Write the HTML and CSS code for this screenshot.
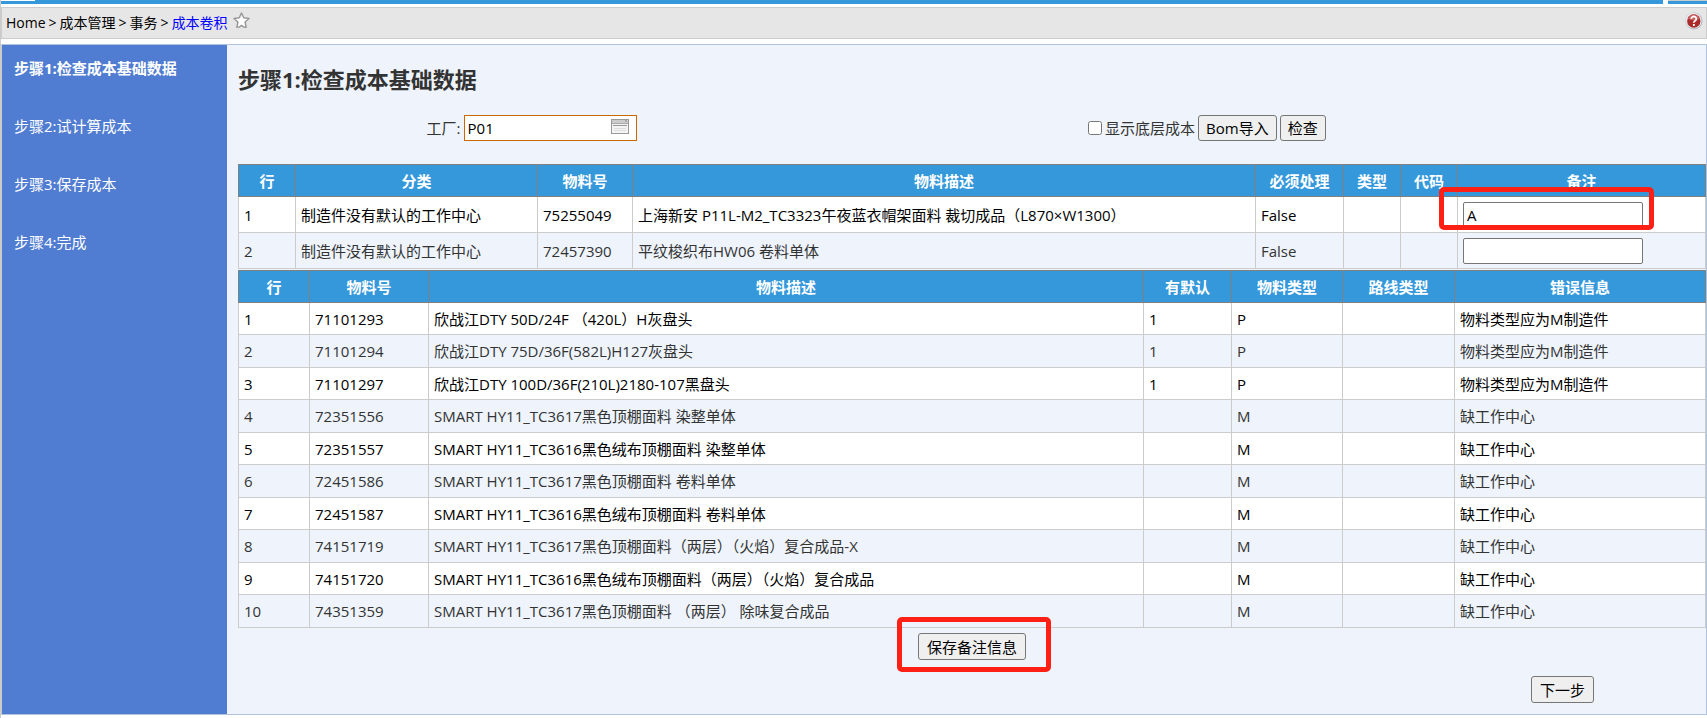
FILE: index.html
```
<!DOCTYPE html>
<html lang="zh-CN">
<head>
<meta charset="utf-8">
<title>成本卷积</title>
<link rel="stylesheet" href="styles.css">
</head>
<body>
<div class="tabline"><span class="tab-active"></span><span class="tab-rest"></span><span class="tab-end"></span></div>
<header class="crumbs">
  <nav class="trail">
    <span>Home</span><span>&gt;</span><span>成本管理</span><span>&gt;</span><span>事务</span><span>&gt;</span><a class="current" href="#">成本卷积</a>
    <svg class="star" width="17" height="17" viewBox="0 0 17 17"><path d="M8.500 1l2.200 4.800 5.300.7-3.900 3.500 1 5.300-2.300-.2-2.300-1.700-2.300 1.700-2.300.2 1-5.300L1 6.500l5.300-.7z" fill="#fff" stroke="#999" stroke-width="1.500" stroke-linejoin="round"/></svg>
  </nav>
  <svg class="help" width="18" height="18" viewBox="0 0 18 18"><circle cx="9" cy="9" r="8.500" fill="#a9adb3"/><circle cx="8.700" cy="8.700" r="7.900" fill="#e9ebee"/><circle cx="8.800" cy="9" r="6.700" fill="#a92a2a"/><path d="M3 7a6 6 0 0 1 11.600 0q-5.800 2.500-11.600 0z" fill="#c96060"/><path d="M6.300 6.800a2.500 2.300 0 1 1 3.900 1.900q-1.400.8-1.400 2" fill="none" stroke="#fff" stroke-width="1.800"/><rect x="7.900" y="12" width="1.900" height="1.900" fill="#fff"/></svg>
</header>
<main class="wizard">
  <nav class="steps">
    <a class="step active" href="#">步骤1:检查成本基础数据</a>
    <a class="step" href="#">步骤2:试计算成本</a>
    <a class="step" href="#">步骤3:保存成本</a>
    <a class="step" href="#">步骤4:完成</a>
  </nav>
  <section class="content">
    <h1 class="title">步骤1:检查成本基础数据</h1>
    <form class="filters">
      <div class="filter">
        <label for="plant">工厂:</label>
        <span class="lookup"><input id="plant" class="lookup-input" type="text" value="P01"><svg class="lookup-icon" width="18" height="15" viewBox="0 0 18 15"><rect x=".5" y=".5" width="17" height="14" fill="#f4f4f4" stroke="#999"/><path d="M1 2.500h16" stroke="#ccc" stroke-width="3"/><path d="M14 2h2" stroke="#888"/><path d="M1 4.500h16" stroke="#aaa"/><path d="M2 6.500h14" stroke="#999"/><path d="M3 9.500h12M3 11.500h12" stroke="#ddd"/></svg></span>
      </div>
      <div class="filter">
        <input id="low" class="check" type="checkbox"><label class="check-label" for="low">显示底层成本</label>
        <button class="btn" type="button">Bom导入</button>
        <button class="btn" type="button">检查</button>
      </div>
    </form>
    <table class="grid issues">
      <colgroup><col class="w57"><col class="w242"><col class="w95"><col><col class="w88"><col class="w57"><col class="w57"><col class="w248"></colgroup>
      <thead><tr><th>行</th><th>分类</th><th>物料号</th><th>物料描述</th><th>必须处理</th><th>类型</th><th>代码</th><th>备注</th></tr></thead>
      <tbody>
        <tr><td>1</td><td>制造件没有默认的工作中心</td><td>75255049</td><td>上海新安 P11L-M2_TC3323午夜蓝衣帽架面料 裁切成品（L870×W1300）</td><td>False</td><td></td><td></td><td class="note"><input class="note-input" type="text" value="A" aria-label="备注 1"><span class="mark mark-note"></span></td></tr>
        <tr><td>2</td><td>制造件没有默认的工作中心</td><td>72457390</td><td>平纹梭织布HW06 卷料单体</td><td>False</td><td></td><td></td><td class="note"><input class="note-input" type="text" aria-label="备注 2"></td></tr>
      </tbody>
    </table>
    <table class="grid errors">
      <colgroup><col class="w71"><col class="w119"><col><col class="w88"><col class="w111"><col class="w112"><col class="w251"></colgroup>
      <thead><tr><th>行</th><th>物料号</th><th>物料描述</th><th>有默认</th><th>物料类型</th><th>路线类型</th><th>错误信息</th></tr></thead>
      <tbody>
        <tr><td>1</td><td>71101293</td><td>欣战江DTY 50D/24F （420L）H灰盘头</td><td>1</td><td>P</td><td></td><td>物料类型应为M制造件</td></tr>
        <tr><td>2</td><td>71101294</td><td>欣战江DTY 75D/36F(582L)H127灰盘头</td><td>1</td><td>P</td><td></td><td>物料类型应为M制造件</td></tr>
        <tr><td>3</td><td>71101297</td><td>欣战江DTY 100D/36F(210L)2180-107黑盘头</td><td>1</td><td>P</td><td></td><td>物料类型应为M制造件</td></tr>
        <tr><td>4</td><td>72351556</td><td>SMART HY11_TC3617黑色顶棚面料 染整单体</td><td></td><td>M</td><td></td><td>缺工作中心</td></tr>
        <tr><td>5</td><td>72351557</td><td>SMART HY11_TC3616黑色绒布顶棚面料 染整单体</td><td></td><td>M</td><td></td><td>缺工作中心</td></tr>
        <tr><td>6</td><td>72451586</td><td>SMART HY11_TC3617黑色顶棚面料 卷料单体</td><td></td><td>M</td><td></td><td>缺工作中心</td></tr>
        <tr><td>7</td><td>72451587</td><td>SMART HY11_TC3616黑色绒布顶棚面料 卷料单体</td><td></td><td>M</td><td></td><td>缺工作中心</td></tr>
        <tr><td>8</td><td>74151719</td><td>SMART HY11_TC3617黑色顶棚面料（两层）（火焰）复合成品-X</td><td></td><td>M</td><td></td><td>缺工作中心</td></tr>
        <tr><td>9</td><td>74151720</td><td>SMART HY11_TC3616黑色绒布顶棚面料（两层）（火焰）复合成品</td><td></td><td>M</td><td></td><td>缺工作中心</td></tr>
        <tr><td>10</td><td>74351359</td><td>SMART HY11_TC3617黑色顶棚面料 （两层） 除味复合成品</td><td></td><td>M</td><td></td><td>缺工作中心</td></tr>
      </tbody>
    </table>
    <div class="save-row"><span class="save-wrap"><button class="btn" type="button">保存备注信息</button><span class="mark mark-save"></span></span></div>
    <div class="next-row"><button class="btn" type="button">下一步</button></div>
  </section>
</main>
</body>
</html>
```
FILE: styles.css
```
* { box-sizing: border-box; }
body {
  margin: 0;
  padding: 0 0 3px 1px;
  background: #fff;
  box-shadow: inset 1px 0 #ccc;
  color: #333;
  font: 15px/20px "Open Sans", "Noto Sans CJK SC", sans-serif;
}
input, button { font: inherit; }
a { color: inherit; text-decoration: none; }

.tabline { display: flex; height: 4px; margin-bottom: 3px; }
.tab-active { width: 34px; border-top: 1px solid #fff; background: #3498db; }
.tab-rest { flex: 1; margin-right: 5px; background: #3498db; }
.tab-end { width: 39px; border-top: 1px solid #ccc; background: #3498db; }

.crumbs {
  display: flex;
  justify-content: space-between;
  height: 32px;
  margin-bottom: 5px;
  padding: 4px 3px 0 4px;
  border: 1px solid #ccc;
  background: #e6e6e6;
  color: #000;
  font-size: 14px;
}
.trail { display: flex; gap: 3px; white-space: nowrap; line-height: 22px; }
.star { margin-left: 2px; }
.current { color: #00f; }

.wizard { display: flex; border: 1px solid #b0c4de; border-left-color: #ccc; background: #eef3fc; }
.steps { flex: none; width: 225px; padding: 13px 12px; background: #507cd1; color: #fff; }
.step { display: block; margin-bottom: 38px; }
.active { font-weight: 700; }
.content { flex: 1; min-width: 0; padding: 18px 0 11px 11px; }
.title { margin: 0 0 20px; font-size: 22px; line-height: 32px; }

.filters { display: grid; grid-template-columns: 40fr 52fr 8fr; margin-bottom: 23px; }
.filter { display: flex; justify-content: center; align-items: center; gap: 3px; }
.lookup { position: relative; display: flex; }
.lookup-input { width: 173px; height: 26px; padding: 0 3px; border: 1px solid #c60; background: #fff; }
.lookup-icon { position: absolute; top: 4px; right: 8px; }
.check { width: 14px; height: 14px; margin: 0; }
.btn {
  height: 27px;
  padding: 0 8px;
  border: 1px solid #767676;
  border-radius: 3px;
  background: #efefef;
  color: #000;
  line-height: 22px;
}
.filter .btn { height: 26px; padding: 0 7px; }

.grid { width: 100%; border-collapse: collapse; table-layout: fixed; white-space: nowrap; }
.grid th { height: 32px; padding: 0; border: 1px solid gray; background: #3498db; color: #fff; }
.grid td { padding: 0 5px; border: 1px solid #ccc; }
.grid tbody tr:nth-child(odd) { background: #fff; color: #000; }
.issues { margin-bottom: 1px; }
.issues td { height: 36px; }
.errors td { height: 32px; }
.errors tr:nth-child(even) td { height: 33px; }
.note { position: relative; }
.note-input { display: block; width: 180px; height: 26px; padding: 0 3px; border: 1px solid #767676; border-radius: 2px; background: #fff; }
.mark { position: absolute; border: 5px solid #fe2015; border-radius: 5px; pointer-events: none; }
.mark-note { top: -10px; left: -19px; width: 215px; height: 43px; }
.mark-save { top: -16px; left: -21px; right: -25px; bottom: -12px; }

.w57 { width: 57px; }
.w71 { width: 71px; }
.w88 { width: 88px; }
.w95 { width: 95px; }
.w111 { width: 111px; }
.w112 { width: 112px; }
.w119 { width: 119px; }
.w242 { width: 242px; }
.w248 { width: 248px; }
.w251 { width: 251px; }

.save-row { display: flex; justify-content: center; padding-top: 5px; }
.save-wrap { position: relative; display: flex; }
.next-row { display: flex; justify-content: flex-end; padding: 16px 112px 0 0; }
```
